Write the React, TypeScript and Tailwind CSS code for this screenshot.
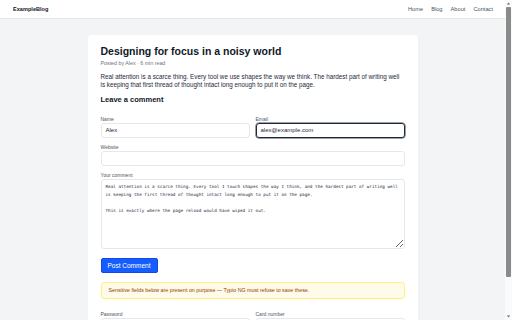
import { useState } from "react";

// Blog post page with a comment form, drawn at half scale.

const sans = "font-['Liberation_Sans',Arial,sans-serif]";

function Field({
  label,
  value,
  focused,
}: {
  label: string;
  value?: string;
  focused?: boolean;
}) {
  return (
    <div className="flex flex-col">
      <label className="mb-[1px] text-[5px] leading-[6px] text-gray-600">{label}</label>
      <div
        className={
          focused
            ? "flex h-[15px] items-center rounded-[3px] border border-gray-800 px-[4px] text-[6px] text-gray-800 shadow-[0_0_0_0.5px_#374151]"
            : "flex h-[15px] items-center rounded-[3px] border border-gray-200 bg-white px-[4px] text-[6px] text-gray-800"
        }
      >
        {value}
      </div>
    </div>
  );
}

function Scrollbar() {
  return (
    <div className="flex w-[7px] shrink-0 flex-col items-center bg-[#fafafa]">
      <svg width="5" height="7" viewBox="0 0 5 7" className="shrink-0">
        <path d="M0.8 4.5 L2.5 2.6 L4.2 4.5 Z" fill="#6b6b6b" />
      </svg>
      <div className="h-[270px] w-[5px] shrink-0 rounded-[1px] bg-[#8a8a8a]" />
      <div className="flex-1" />
      <svg width="5" height="7" viewBox="0 0 5 7" className="shrink-0">
        <path d="M0.8 2.5 L2.5 4.4 L4.2 2.5 Z" fill="#6b6b6b" />
      </svg>
    </div>
  );
}

export default function App() {
  const [comment, setComment] = useState(
    "Real attention is a scarce thing. Every tool I touch shapes the way I think, and the hardest part of writing well is keeping the first thread of thought intact long enough to put it on the page.\n\nThis is exactly where the page reload would have wiped it out.",
  );

  return (
    <div className={`${sans} flex h-screen bg-gray-100`}>
      <div className="min-w-0 flex-1 overflow-y-auto [scrollbar-width:none]">
        <header className="flex h-[19px] items-center justify-between border-b border-gray-200 bg-white px-[12px]">
          <span className="pl-[1px] text-[5.6px] font-bold text-gray-900">ExampleBlog</span>
          <nav className="flex gap-[8px] text-[5.7px] text-gray-600">
            <a>Home</a>
            <a>Blog</a>
            <a>About</a>
            <a>Contact</a>
          </nav>
        </header>

        <main className="px-4 pt-[15px] pb-[16px]">
          <article className="mx-auto w-[332px] rounded-[4px] border border-gray-100 bg-white px-[13px] pt-[10px] pb-[14px] shadow-[0_1px_2px_rgba(0,0,0,0.04)]">
            <h1 className="text-[10.5px] leading-[13px] font-bold text-gray-900">
              Designing for focus in a noisy world
            </h1>
            <p className="mt-[1px] text-[5.3px] leading-[8px] text-gray-500">Posted by Alex · 6 min read</p>
            <p className="mt-[6px] text-[6.3px] leading-[7.7px] text-gray-800">
              Real attention is a scarce thing. Every tool we use shapes the way we think. The hardest part of
              writing well is keeping that first thread of thought intact long enough to put it on the page.
            </p>
            <h2 className="mt-[7px] text-[7.5px] leading-[10px] font-bold text-gray-900">Leave a comment</h2>

            <form className="mt-[11px] flex flex-col gap-[6px]">
              <div className="grid grid-cols-2 gap-[6px]">
                <Field label="Name" value="Alex" />
                <Field label="Email" value="alex@example.com" focused />
              </div>
              <Field label="Website" />
              <div className="flex flex-col">
                <label className="mb-[1px] text-[5px] leading-[6px] text-gray-600">Your comment</label>
                <textarea
                  value={comment}
                  onChange={(e) => setComment(e.target.value)}
                  className="h-[70px] resize-y rounded-[3px] border border-gray-200 px-[4px] py-[3px] font-['DejaVu_Sans_Mono',monospace] text-[4.3px] leading-[8px] text-gray-800 outline-none"
                />
              </div>

              <div className="mt-[3px] flex">
                <button
                  type="button"
                  className="h-[15px] w-[57px] rounded-[2px] border border-blue-700 bg-blue-600 text-[6.5px] leading-none font-medium text-white"
                >
                  Post Comment
                </button>
              </div>

              <div className="mt-[3px] flex h-[17px] items-center rounded-[3px] border border-yellow-200 bg-yellow-50 px-[7px] text-[5.3px] text-amber-800">
                Sensitive fields below are present on purpose — Typio NG must refuse to save these.
              </div>

              <div className="mt-[6px] grid grid-cols-2 gap-[6px]">
                <Field label="Password" />
                <Field label="Card number" />
              </div>
            </form>
          </article>
        </main>
      </div>
      <Scrollbar />
    </div>
  );
}
